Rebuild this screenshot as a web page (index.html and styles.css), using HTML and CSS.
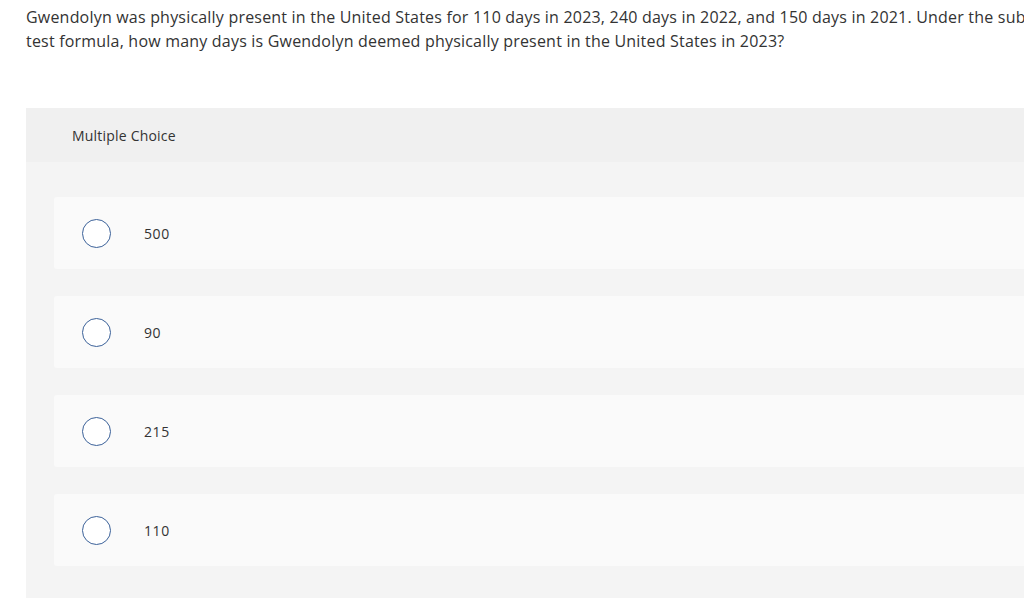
FILE: index.html
```html
<!DOCTYPE html>
<html lang="en">
<head>
    <meta charset="UTF-8">
    <meta name="viewport" content="width=device-width, initial-scale=1.0">
    <title>Multiple Choice</title>
    <link rel="stylesheet" href="styles.css">
</head>
<body>
    <div class="page">
        <p class="question">Gwendolyn was physically present in the United States for 110 days in 2023, 240 days in 2022, and 150 days in 2021. Under the substantial presence test formula, how many days is Gwendolyn deemed physically present in the United States in 2023?</p>

        <div class="choice-panel">
            <div class="choice-header">Multiple Choice</div>
            <div class="choice-list">
                <label class="choice">
                    <span class="radio"></span>
                    <span class="choice-text">500</span>
                </label>
                <label class="choice">
                    <span class="radio"></span>
                    <span class="choice-text">90</span>
                </label>
                <label class="choice">
                    <span class="radio"></span>
                    <span class="choice-text">215</span>
                </label>
                <label class="choice">
                    <span class="radio"></span>
                    <span class="choice-text">110</span>
                </label>
            </div>
        </div>
    </div>
</body>
</html>
```

FILE: styles.css
```css
html, body {
    overflow: hidden;
}
body {
    margin: 0;
    background: #ffffff;
    font-family: "Open Sans", sans-serif;
    color: #333333;
}
.page {
    width: 1180px;
    padding: 5px 0 0 26px;
}
.question {
    margin: 0;
    width: 1145px;
    font-size: 16px;
    line-height: 24px;
    letter-spacing: 0.2px;
    color: #333333;
}
.choice-panel {
    margin-top: 55px;
    background: #f4f4f4;
}
.choice-header {
    height: 54px;
    display: flex;
    align-items: center;
    padding-left: 46px;
    background: #f0f0f0;
    font-size: 14px;
    letter-spacing: 0.2px;
    color: #333333;
}
.choice-list {
    display: flex;
    flex-direction: column;
    gap: 27px;
    padding: 35px 0 32px 28px;
}
.choice {
    height: 72px;
    display: flex;
    align-items: center;
    background: #fafafa;
    border-radius: 3px;
    padding-left: 28px;
    cursor: pointer;
}
.radio {
    width: 27px;
    height: 27px;
    border: 1.5px solid #3b6199;
    border-radius: 50%;
    background: #ffffff;
    flex-shrink: 0;
}
.choice-text {
    margin-left: 33px;
    font-size: 14px;
    letter-spacing: 0.6px;
    color: #333333;
}
```
